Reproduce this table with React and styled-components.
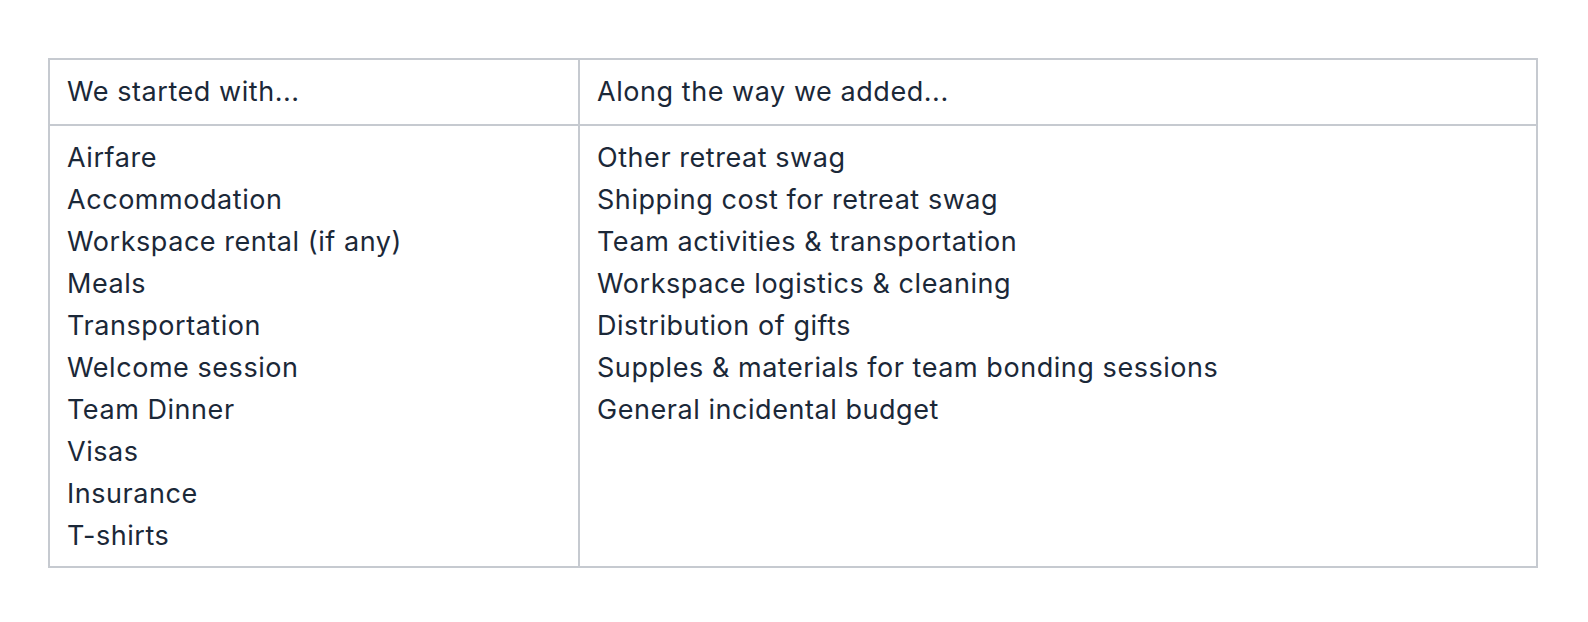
import React from "react";
import styled, { createGlobalStyle } from "styled-components";

const Global = createGlobalStyle`
  html, body { margin: 0; padding: 0; background: #ffffff; }
  body { font-family: Inter, "Noto Sans", sans-serif; color: #1b2838; }
`;

const Page = styled.div`
  padding: 58px 0 0 48px;
`;

const Table = styled.table`
  width: 1488px;
  border-collapse: collapse;
  border: 2px solid #c6cad0;
  table-layout: fixed;
  font-size: 27px;
  line-height: 42px;
  letter-spacing: 0.55px;
  color: #1b2838;
`;

const Col = styled.col`
  width: ${(p) => p.$w}px;
`;

const HeadCell = styled.th`
  text-align: left;
  font-weight: 400;
  padding: 11px 17px;
  border: 2px solid #c6cad0;
`;

const BodyCell = styled.td`
  vertical-align: top;
  padding: 11px 17px 9px;
  border: 2px solid #c6cad0;
`;

const Item = styled.div`
  white-space: nowrap;
`;

const started = [
  "Airfare",
  "Accommodation",
  "Workspace rental (if any)",
  "Meals",
  "Transportation",
  "Welcome session",
  "Team Dinner",
  "Visas",
  "Insurance",
  "T-shirts",
];

const added = [
  "Other retreat swag",
  "Shipping cost for retreat swag",
  "Team activities & transportation",
  "Workspace logistics & cleaning",
  "Distribution of gifts",
  "Supples & materials for team bonding sessions",
  "General incidental budget",
];

export default function App() {
  return (
    <>
      <Global />
      <Page>
        <Table>
          <colgroup>
            <Col $w={530} />
            <Col $w={958} />
          </colgroup>
          <thead>
            <tr>
              <HeadCell>We started with...</HeadCell>
              <HeadCell>Along the way we added...</HeadCell>
            </tr>
          </thead>
          <tbody>
            <tr>
              <BodyCell>
                {started.map((t) => (
                  <Item key={t}>{t}</Item>
                ))}
              </BodyCell>
              <BodyCell>
                {added.map((t) => (
                  <Item key={t}>{t}</Item>
                ))}
              </BodyCell>
            </tr>
          </tbody>
        </Table>
      </Page>
    </>
  );
}
